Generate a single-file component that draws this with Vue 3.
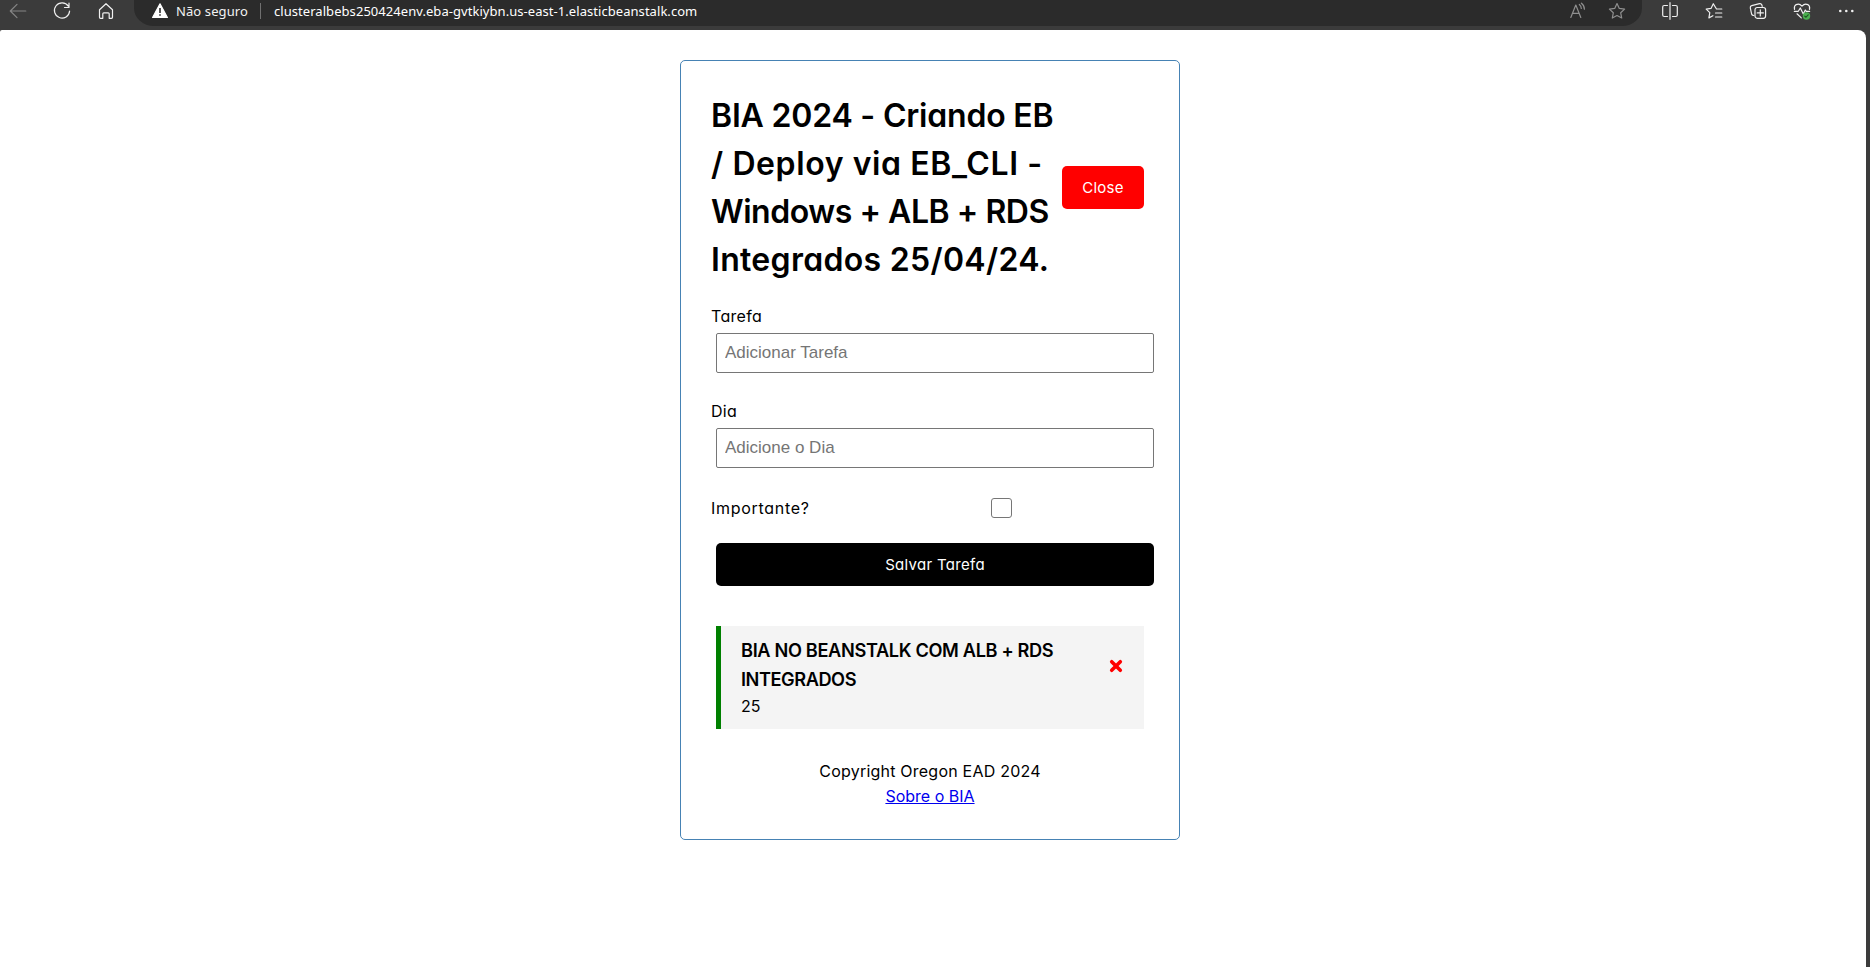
<script setup>
import { ref } from 'vue'

const titleLines = [
  { text: 'BIA 2024 - Criando EB', cls: 't1' },
  { text: '/ Deploy via EB_CLI -', cls: 't2' },
  { text: 'Windows + ALB + RDS', cls: 't3' },
  { text: 'Integrados 25/04/24.', cls: 't4' },
]
const task = ref('')
const day = ref('')
const important = ref(false)
</script>

<template>
  <div class="window">
    <header class="toolbar">
      <nav class="nav">
        <svg class="ico dim" viewBox="0 0 20 20"><path d="M17.8 10H2.5M9 3.300 2.300 10 9 16.700" /></svg>
        <svg class="ico" viewBox="0 0 20 20"><path d="M16.300 5.200A7.600 7.600 0 1 0 17.600 10M17 2.200v4.300h-4.500" /></svg>
        <svg class="ico" viewBox="0 0 20 20"><path d="M3.500 8.700 10 2.700l6.500 6v7.600q0 1-1 1h-2.300v-4.500q0-1-1-1H7.800q-1 0-1 1v4.500H4.500q-1 0-1-1z" /></svg>
      </nav>
      <div class="address">
        <svg class="ico warn" viewBox="0 0 20 20"><path class="tri" d="M10 2.800 17.400 16.500H2.600z" /><path class="mark" d="M10 7v5M10 13.200v1.600" /></svg>
        <span class="secure">Não seguro</span>
        <span class="divider"></span>
        <span class="url">clusteralbebs250424env.eba-gvtkiybn.us-east-1.elasticbeanstalk.com</span>
        <svg class="ico faint read" viewBox="0 0 20 20"><path d="M2.800 16.500 7.800 4l5 12.500M4.500 12.300h6.600M11.300 3.500q2 1.500 2 4M13.400 2.200q3 2.300 3 6" /></svg>
        <svg class="ico faint fav" viewBox="0 0 20 20"><path d="m10 2.600 2.300 4.800 5.300.7-3.900 3.700 1 5.200L10 14.500 5.300 17l1-5.200-3.900-3.700 5.300-.7z" /></svg>
      </div>
      <div class="tools">
        <svg class="ico" viewBox="0 0 20 20"><path d="M7.500 4.500H4.200q-1.500 0-1.500 1.500v8q0 1.500 1.500 1.500h3.300M12.500 4.500h3.300q1.500 0 1.500 1.500v8q0 1.500-1.500 1.500h-3.300M10 1.700v16.600" /></svg>
        <svg class="ico" viewBox="0 0 20 20"><path d="M17.800 8h-5.300L9.300 2.700 7 7.400l-4.800.7 3.600 3.600-.9 5.200 4-2.200M11.500 12h6.300M11.500 16h6.300" /></svg>
        <svg class="ico" viewBox="0 0 20 20"><path d="M5.800 14.500q-1.800 0-2.200-1.500L2.300 6.800q-.3-1.700 1.400-2.100l7.800-2q1.700-.4 2.400 1.300l.3 1.300" /><rect x="7" y="6.500" width="10.600" height="10.800" rx="2.200" /><path d="M12.300 8.800v6.200M9.200 11.900h6.200" /></svg>
        <svg class="ico" viewBox="0 0 20 20"><path d="M2.500 8.300Q1.800 5 4.200 3.600 7.300 2 10 5.100 12.700 2 15.800 3.600q2.400 1.400 1.700 4.700M2.300 10.300h4l2-3.300 3 6 2-4 1 1.300h3.400M5 12.800l4.300 4.100" /><circle class="ok" cx="14.500" cy="15" r="3.700" /><path class="check" d="m12.800 15.200 1.200 1 2.200-2.400" /></svg>
        <svg class="ico dots" viewBox="0 0 20 20"><circle cx="4.300" cy="10" r="1.300" /><circle cx="10.300" cy="10" r="1.300" /><circle cx="16.300" cy="10" r="1.300" /></svg>
      </div>
    </header>

    <main class="page">
      <section class="container">
        <div class="heading">
          <h1><span v-for="line in titleLines" :key="line.cls" :class="line.cls">{{ line.text }}</span></h1>
          <button class="btn close" type="button"><span>Close</span></button>
        </div>

        <form class="form" @submit.prevent>
          <div class="control">
            <label for="task">Tarefa</label>
            <input id="task" v-model="task" type="text" placeholder="Adicionar Tarefa" />
          </div>
          <div class="control">
            <label for="day">Dia</label>
            <input id="day" v-model="day" type="text" placeholder="Adicione o Dia" />
          </div>
          <div class="control-check">
            <label for="important">Importante?</label>
            <input id="important" v-model="important" type="checkbox" />
          </div>
          <button class="btn save" type="submit"><span>Salvar Tarefa</span></button>
        </form>

        <article class="task">
          <div class="task-text">
            <h3><span class="k1">BIA NO BEANSTALK COM ALB + RDS</span><span class="k2">INTEGRADOS</span></h3>
            <p>25</p>
          </div>
          <svg class="remove" viewBox="0 0 14 14"><path d="m2.700 2.700 8.600 8.600M11.300 2.700l-8.600 8.600" /></svg>
        </article>

        <footer>
          <p>Copyright Oregon EAD 2024</p>
          <a href="#"><span>Sobre o BIA</span></a>
        </footer>
      </section>
    </main>
  </div>
</template>

<style>
body {
  margin: 0;
  overflow: hidden;
}
</style>

<style scoped>
* {
  box-sizing: border-box;
  margin: 0;
  padding: 0;
}
.window {
  display: flex;
  flex-direction: column;
  height: 967px;
  background: #3b3b3b;
  overflow: hidden;
}
.toolbar {
  display: flex;
  height: 30px;
  flex: none;
  color: #f2f2f2;
  font-family: "Noto Sans", "Open Sans", sans-serif;
  font-size: 13px;
}
.nav,
.tools {
  display: flex;
  gap: 24px;
  padding-top: 1px;
}
.nav {
  padding-left: 8px;
}
.tools {
  margin-left: 18px;
}
.ico {
  width: 20px;
  height: 20px;
  flex: none;
  fill: none;
  stroke: #f0f0f0;
  stroke-width: 1.2;
  stroke-linecap: round;
  stroke-linejoin: round;
}
.ico.dim {
  stroke: #858585;
}
.ico.faint {
  stroke: #8f8f8f;
}
.ico .tri {
  fill: #fff;
  stroke: #fff;
}
.ico .mark {
  stroke: #2b2b2b;
  stroke-width: 1.6;
  stroke-linecap: butt;
}
.ico .ok {
  fill: #4caf50;
  stroke: none;
}
.ico .check {
  stroke: #1d5a22;
}
.dots circle {
  fill: #f0f0f0;
  stroke: none;
}
.address {
  display: flex;
  width: 1508px;
  height: 26px;
  margin-left: 18px;
  padding: 1px 15px 0 16px;
  border-radius: 0 0 20px 20px / 0 0 18px 18px;
  background: #2b2b2b;
  line-height: 20px;
  white-space: nowrap;
}
.secure {
  width: 84px;
  margin-left: 6px;
  letter-spacing: 0.1px;
}
.divider {
  width: 1px;
  height: 16px;
  margin-top: 2px;
  background: #707070;
}
.url {
  margin-left: 13px;
  color: #fff;
  letter-spacing: 0.054px;
}
.read {
  margin-left: auto;
}
.fav {
  margin-left: 19px;
}
.page {
  flex: 1;
  width: 1866px;
  padding-top: 30px;
  padding-right: 6px;
  border-radius: 2px 8px 0 0;
  background: #fff;
}
.container {
  width: 500px;
  height: 780px;
  margin: 0 auto;
  padding: 30px 25px 0 30px;
  border: 1px solid steelblue;
  border-radius: 5px;
  color: #000;
  font-family: Inter, "Open Sans", sans-serif;
  font-feature-settings: "cv11";
  font-size: 16px;
  line-height: 24px;
}
.heading {
  display: flex;
  align-items: center;
  justify-content: space-between;
  height: 192px;
  padding-right: 10px;
}
h1 {
  width: 350px;
  padding-top: 1px;
  margin-bottom: -1px;
  font-size: 32px;
  line-height: 48px;
  font-weight: 600;
}
h1 span,
h3 span {
  display: block;
  width: max-content;
  white-space: nowrap;
}
.t1 {
  letter-spacing: -0.2px;
}
.t2 {
  letter-spacing: 0.6px;
}
.t3 {
  letter-spacing: -0.46px;
}
.t4 {
  letter-spacing: 0.31px;
}
.btn {
  height: 43px;
  border: 0;
  border-radius: 5px;
  color: #fff;
  font: inherit;
  font-size: 15px;
  letter-spacing: 0.3px;
  white-space: nowrap;
}
.close {
  width: 82px;
  margin-top: 1px;
  background: red;
}
.form {
  margin-top: 21px;
}
.control {
  height: 95px;
}
.control label {
  display: block;
  height: 24px;
  letter-spacing: 0.3px;
}
.control input {
  display: block;
  width: 438px;
  height: 40px;
  margin: 5px 0 0 5px;
  padding: 3px 8px;
  border: 1px solid #767676;
  border-radius: 2px;
  font: 17px "Liberation Sans", Arial, sans-serif;
  outline: 0;
}
.control input::placeholder {
  color: #757575;
}
.control-check {
  display: flex;
  align-items: center;
  height: 30px;
  margin-top: -1px;
}
.control-check label {
  width: 280px;
  letter-spacing: 0.7px;
}
.control-check input {
  width: 21px;
  height: 20px;
  appearance: none;
  border: 1px solid #767676;
  border-radius: 3px;
  background: #fff;
}
.save {
  display: block;
  width: 438px;
  margin: 20px 0 0 5px;
  background: #000;
}
.task {
  display: flex;
  justify-content: space-between;
  width: 428px;
  height: 103px;
  margin: 40px 0 0 5px;
  padding: 10px 21px 0 20px;
  border-left: 5px solid green;
  background: #f4f4f4;
}
h3 {
  font-size: 18.2px;
  line-height: 29px;
  font-weight: 600;
}
.k1 {
  letter-spacing: -0.35px;
}
.k2 {
  letter-spacing: -0.45px;
}
.remove {
  width: 14px;
  height: 14px;
  margin-top: 22.5px;
  fill: none;
  stroke: red;
  stroke-width: 3.6;
  stroke-linecap: round;
}
footer {
  margin: 30px 5px 0 0;
  line-height: 25px;
  text-align: center;
}
footer p {
  letter-spacing: 0.22px;
}
footer a {
  display: block;
  color: #0000ee;
}
</style>
